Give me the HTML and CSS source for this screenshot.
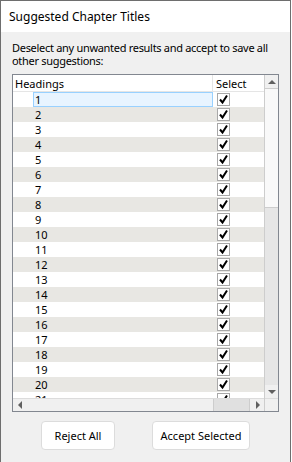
FILE: index.html
```html
<!DOCTYPE html>
<html lang="en">
<head>
    <meta charset="UTF-8">
    <meta name="viewport" content="width=device-width, initial-scale=1.0">
    <title>Suggested Chapter Titles</title>
    <link rel="stylesheet" href="styles.css">
</head>
<body>
    <div class="window">
        <div class="titlebar">Suggested Chapter Titles</div>
        <div class="content">
            <p class="intro">Deselect any unwanted results and accept to save all other suggestions:</p>
            <div class="grid-box">
                <div class="grid-main">
                    <div class="grid-head">
                        <div class="col-heading">Headings</div>
                        <div class="col-select">Select</div>
                    </div>
                    <div class="grid-rows" id="rows"></div>
                    <div class="hscroll">
                        <div class="arrow-left"></div>
                        <div class="htrack"><div class="hthumb"></div></div>
                        <div class="arrow-right"></div>
                    </div>
                </div>
                <div class="vscroll">
                    <div class="arrow-up"></div>
                    <div class="vthumb"></div>
                    <div class="vtrack"></div>
                    <div class="arrow-down"></div>
                    <div class="corner"></div>
                </div>
            </div>
            <div class="buttons">
                <button type="button" class="btn btn-reject">Reject All</button>
                <button type="button" class="btn btn-accept">Accept Selected</button>
            </div>
        </div>
    </div>
    <script>
        var rows = document.getElementById("rows");
        var tick = '<svg width="11" height="11" viewBox="0 0 11 11"><path d="M2 5.5 L4.5 8.5 L9 1.5" fill="none" stroke="#000" stroke-width="2"/></svg>';
        for (var i = 1; i <= 21; i++) {
            var row = document.createElement("div");
            row.className = "row" + (i % 2 == 0 ? " alt" : "");
            row.innerHTML = '<div class="cell-heading"><span class="num' + (i == 1 ? ' current' : '') + '">' + i + '</span></div>' +
                '<div class="cell-select"><span class="check">' + tick + '</span></div>';
            rows.appendChild(row);
        }
    </script>
</body>
</html>
```

FILE: styles.css
```css
body {
    margin: 0;
    background-color: #ffffff;
    font-family: "Noto Sans", sans-serif;
    font-size: 11px;
    color: #000000;
}

.window {
    width: 289px;
    height: 461px;
    border: 1px solid #6e6e6e;
    display: flex;
    flex-direction: column;
    background-color: #f0f0f0;
}

.titlebar {
    height: 31px;
    background-color: #ffffff;
    padding-left: 8px;
    line-height: 31px;
    font-size: 12px;
}

.content {
    flex: 1;
    display: flex;
    flex-direction: column;
    padding: 9px 11px 0 11px;
}

.intro {
    margin: 0 0 7px 0;
    line-height: 13px;
    font-size: 11px;
    letter-spacing: -0.3px;
}

.grid-box {
    height: 336px;
    border: 1px solid #828790;
    display: flex;
    background-color: #ffffff;
}

.grid-main {
    width: 252px;
    display: flex;
    flex-direction: column;
}

.grid-head {
    height: 16px;
    display: flex;
    border-bottom: 1px solid #e5e5e5;
    line-height: 17px;
}

.col-heading {
    width: 197px;
    padding-left: 2px;
    border-right: 1px solid #e5e5e5;
}

.col-select {
    padding-left: 3px;
}

.grid-rows {
    flex: 1;
    overflow: hidden;
}

.row {
    height: 15px;
    display: flex;
}

.row.alt {
    background-color: #e8e7e3;
}

.cell-heading {
    width: 200px;
    padding-left: 20px;
    box-sizing: border-box;
}

.num {
    display: block;
    height: 15px;
    line-height: 15px;
    padding-left: 2px;
    box-sizing: border-box;
}

.num.current {
    background-color: #e8f4ff;
    border: 1px solid #99d1ff;
    line-height: 13px;
    padding-left: 1px;
}

.cell-select {
    padding-left: 4px;
    padding-top: 1px;
}

.check {
    display: flex;
    align-items: center;
    justify-content: center;
    width: 11px;
    height: 11px;
    border: 1px solid #a8a8a8;
    background-color: #ffffff;
}

.hscroll {
    height: 12px;
    display: flex;
    border-top: 1px solid #dcdcdc;
    background-color: #f0f0f0;
}

.arrow-left, .arrow-right {
    width: 13px;
    display: flex;
    align-items: center;
    justify-content: center;
}

.arrow-left::before {
    content: "";
    border-top: 4px solid transparent;
    border-bottom: 4px solid transparent;
    border-right: 4px solid #606060;
}

.arrow-right::before {
    content: "";
    border-top: 4px solid transparent;
    border-bottom: 4px solid transparent;
    border-left: 4px solid #606060;
}

.htrack {
    flex: 1;
    display: flex;
    justify-content: flex-end;
    padding-right: 1px;
}

.hthumb {
    width: 35px;
    background-color: #e0e0e0;
    border-left: 1px solid #cdcdcd;
    border-right: 1px solid #cdcdcd;
}

.vscroll {
    width: 13px;
    border-left: 1px solid #cdcdcd;
    display: flex;
    flex-direction: column;
    background-color: #e6e6e6;
}

.arrow-up, .arrow-down {
    height: 13px;
    display: flex;
    align-items: center;
    justify-content: center;
    background-color: #f0f0f0;
}

.arrow-up {
    border-bottom: 1px solid #cdcdcd;
}

.arrow-up::before {
    content: "";
    border-left: 4px solid transparent;
    border-right: 4px solid transparent;
    border-bottom: 4px solid #606060;
}

.arrow-down::before {
    content: "";
    border-left: 4px solid transparent;
    border-right: 4px solid transparent;
    border-top: 4px solid #606060;
}

.vthumb {
    height: 118px;
    background-color: #f9f9f9;
    border-bottom: 1px solid #cdcdcd;
}

.vtrack {
    flex: 1;
}

.corner {
    height: 12px;
    border-top: 1px solid #dcdcdc;
    background-color: #f0f0f0;
}

.buttons {
    display: flex;
    justify-content: center;
    gap: 37px;
    margin-top: 9px;
}

.btn {
    height: 29px;
    font-family: "Noto Sans", sans-serif;
    font-size: 11px;
    background-color: #ffffff;
    border: 1px solid #dcdcdc;
    border-radius: 4px;
    padding: 0;
    color: #000000;
}

.btn-reject {
    width: 74px;
}

.btn-accept {
    width: 98px;
}
```
